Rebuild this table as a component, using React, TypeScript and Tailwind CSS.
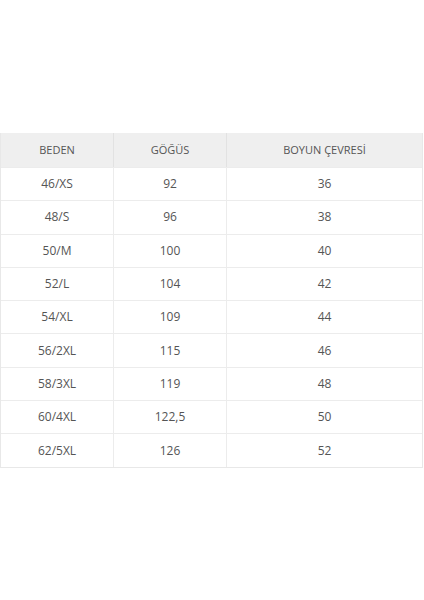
const ROWS = [
  ['46/XS', '92', '36'],
  ['48/S', '96', '38'],
  ['50/M', '100', '40'],
  ['52/L', '104', '42'],
  ['54/XL', '109', '44'],
  ['56/2XL', '115', '46'],
  ['58/3XL', '119', '48'],
  ['60/4XL', '122,5', '50'],
  ['62/5XL', '126', '52'],
]

export default function App() {
  return (
    <div className="w-[424px] h-[600px] bg-white pt-[133px] text-[11px] text-[#555] font-['Open_Sans',sans-serif]">
      <div className="w-[423px] border border-[#e8e8e8] border-t-0">
        {/* Header */}
        <div className="grid grid-cols-[113px_113px_1fr] h-[34px] bg-[#efefef]">
          <div className="flex items-center justify-center border-r border-[#e2e2e2]">BEDEN</div>
          <div className="flex items-center justify-center border-r border-[#e2e2e2]">GÖĞÜS</div>
          <div className="flex items-center justify-center">BOYUN ÇEVRESİ</div>
        </div>
        {ROWS.map((r) => (
          <div key={r[0]} className="grid grid-cols-[113px_113px_1fr] h-[33.3px] border-t border-[#ececec] text-[12px]">
            <div className="flex items-center justify-center border-r border-[#ececec]">{r[0]}</div>
            <div className="flex items-center justify-center border-r border-[#ececec]">{r[1]}</div>
            <div className="flex items-center justify-center">{r[2]}</div>
          </div>
        ))}
      </div>
    </div>
  )
}
